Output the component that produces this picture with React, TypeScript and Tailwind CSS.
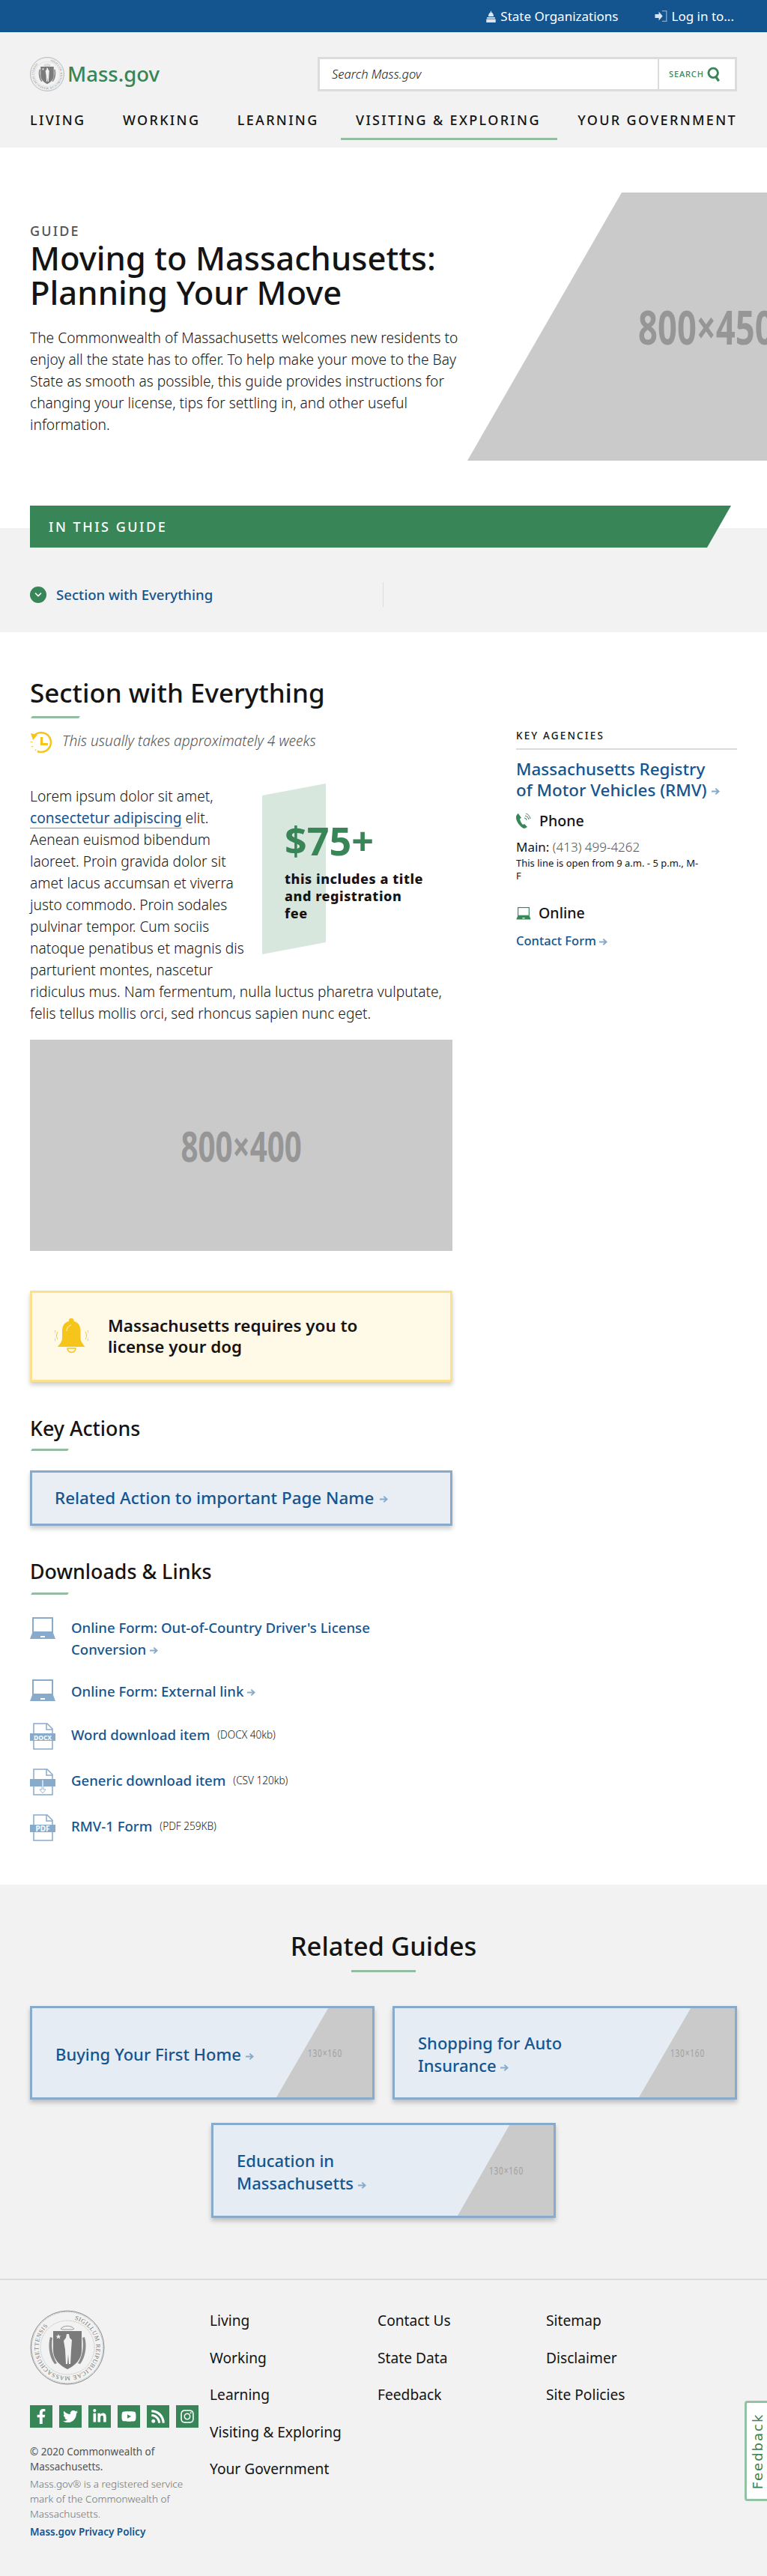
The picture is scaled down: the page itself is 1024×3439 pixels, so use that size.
import { FaFacebookF, FaInstagram, FaLinkedinIn, FaRss, FaTwitter, FaYoutube } from "react-icons/fa";
import { ChevronDown } from "lucide-react";

const navItems = ["Living", "Working", "Learning", "Visiting & Exploring", "Your Government"];
const socials = [FaFacebookF, FaTwitter, FaLinkedinIn, FaYoutube, FaRss, FaInstagram];

const Arrow = ({ className = "" }: { className?: string }) => (
  <svg viewBox="0 0 12 12" className={`inline-block h-[11px] w-[11px] fill-[#88aacb] ${className}`}>
    <path d="M6.5 1 12 6l-5.500 5-1.400-1.500L7.600 7.200H0V4.800h7.600L5.100 2.500z" />
  </svg>
);

const Seal = ({ className = "" }: { className?: string }) => (
  <svg viewBox="0 0 100 100" className={className}>
    <circle cx="50" cy="50" r="49" fill="#f2f2f2" stroke="#8a8a8a" strokeWidth="1" />
    <circle cx="50" cy="50" r="47.500" fill="none" stroke="#9a9a9a" strokeWidth="0.800" strokeDasharray="1 0.800" />
    <circle cx="50" cy="50" r="36" fill="none" stroke="#9a9a9a" strokeWidth="0.600" strokeDasharray="1 0.800" />
    <defs>
      <path id="sealRing" d="M50 11.500a38.500 38.500 0 1 1-.01 0" />
    </defs>
    <text fontSize="8.200" fill="#777" fontFamily="'Liberation Serif', serif" letterSpacing="0.500">
      <textPath href="#sealRing" startOffset="4%">
        SIGILLUM REIPUBLICAE MASSACHUSETTENSIS
      </textPath>
    </text>
    <path d="M31 28h38v26c0 12-9 20-19 25-10-5-19-13-19-25z" fill="#7b7b7b" />
    <path d="M27 36c-3 10-2 26 6 36l3-1c-6-9-8-22-6-34zM73 36c3 10 2 26-6 36l-3-1c6-9 8-22 6-34z" fill="#8a8a8a" />
    <path d="M49 32h3l1 5 3 3-1 13-1 19h-2l-1-13-1 13h-2l-1-19-2-12 3-4z" fill="#f2f2f2" />
    <path d="m38 32 1 2.500h2.500l-2 1.500.8 2.500-2.300-1.500-2.300 1.500.8-2.500-2-1.500H37z" fill="#f2f2f2" />
    <path d="M41 25c4-5 14-5 18 0l-3 1H44z" fill="none" stroke="#9a9a9a" strokeWidth="1" />
  </svg>
);

const Laptop = ({ color = "#88aacb", className = "" }: { color?: string; className?: string }) => (
  <svg viewBox="0 0 34 30" className={className}>
    <rect x="4" y="1" width="26" height="19" fill="none" stroke={color} strokeWidth="2" />
    <path d="M3 21h28l3 8H0z" fill={color} />
    <rect x="14" y="25" width="6" height="2" fill="#fff" />
  </svg>
);

const FileIcon = ({ label }: { label?: string }) => (
  <svg viewBox="0 0 34 36" className="h-[36px] w-[34px] shrink-0">
    <path d="M5 1h18l7 7v27H5z" fill="#fff" stroke="#88aacb" strokeWidth="1.500" />
    <path d="M22 1v8h8" fill="none" stroke="#88aacb" strokeWidth="1.500" />
    <rect x="0" y="14" width="34" height="10" fill="#88aacb" />
    {label ? (
      <text x="17" y="22.500" textAnchor="middle" fontSize={label.length > 3 ? "8.500" : "10"} fontWeight="700" fill="#fff" fontFamily="'Noto Sans', sans-serif">
        {label}
      </text>
    ) : (
      <path d="M16 15h2v13h3l-4 5-4-5h3z" fill="#fff" stroke="#88aacb" strokeWidth="0.800" />
    )}
  </svg>
);

const Placeholder = ({ text, className = "" }: { text: string; className?: string }) => (
  <span className={`inline-block whitespace-nowrap scale-x-[0.72] ${className}`}>{text}</span>
);

const Rule = ({ className = "" }: { className?: string }) => (
  <div className={`h-[3px] -skew-x-[30deg] bg-[#92bda3] ${className}`} />
);

const GuideCard = ({ lines, className = "h-[125px]" }: { lines: string[]; className?: string }) => (
  <a className={`flex w-[460px] border-[3px] border-[#88aacb] bg-[#e6ecf4] shadow-[0_4px_6px_rgba(0,0,0,0.22)] ${className}`}>
    <div className="flex flex-1 items-center pl-[31px] pt-[2px]">
      <p className="text-[22px] font-medium leading-[30px] text-[#14558f]">
        {lines[0]}
        {lines[1] && <br />}
        {lines[1]} <Arrow className="align-[0px]" />
      </p>
    </div>
    <div className="flex w-[128px] items-center justify-center self-stretch bg-[#cacaca] pl-[2px] [clip-path:polygon(54%_0,100%_0,100%_100%,0_100%)]">
      <Placeholder text="130×160" className="text-[14px] font-normal tracking-[0.08em] text-[#a0a0a0]" />
    </div>
  </a>
);

const App = () => {
  return (
    <div className="relative h-[3439px] w-full overflow-hidden bg-white font-['Noto_Sans',sans-serif] text-[#141414]">
      <div className="flex h-[43px] items-center justify-end bg-[#14558f] pr-[44px] text-[17px] text-white">
        <span className="flex items-center gap-[5px]">
          <svg viewBox="0 0 16 18" className="h-[16px] w-[15px] fill-[#dbe4ef]">
            <path d="M8 0l1 3c2 1 3 3 3 6H4c0-3 1-5 3-6zM2 10h12v2H2zM1 13h14v5H1z" />
          </svg>
          State Organizations
        </span>
        <span className="ml-[47px] flex items-center gap-[4px]">
          <svg viewBox="0 0 20 20" className="h-[17px] w-[20px]">
            <path d="M0 7h6V3l6 7-6 7v-4H0z" fill="#dbe4ef" />
            <path d="M11 2h7v16h-7" fill="none" stroke="#88aacb" strokeWidth="1.500" />
          </svg>
          Log in to...
        </span>
      </div>

      <header className="h-[154px] bg-[#f2f2f2] px-10 pt-[33px]">
        <div className="flex h-[46px] items-center justify-between">
          <div className="flex items-center gap-[4px]">
            <Seal className="h-[46px] w-[46px]" />
            <span className="text-[27.500px] font-medium text-[#388557]">Mass.gov</span>
          </div>
          <div className="flex h-[46px] w-[560px] border-[3px] border-[#dcdcdc] bg-white">
            <span className="flex flex-1 items-center pl-[16px] text-[16.500px] font-light italic text-[#141414]">Search Mass.gov</span>
            <span className="flex w-[103px] items-center gap-[3px] border-l-2 border-[#dcdcdc] pl-[13px] text-[11px] font-medium tracking-[0.08em] text-[#388557]">
              SEARCH
              <svg viewBox="0 0 22 24" className="h-[20px] w-[20px]">
                <circle cx="10" cy="10" r="7.500" fill="none" stroke="#388557" strokeWidth="3.500" />
                <path d="M14 16l5 7" stroke="#388557" strokeWidth="4" />
              </svg>
            </span>
          </div>
        </div>
        <nav className="mt-[26px] flex justify-between">
          {navItems.map((item) => (
            <span key={item} className="relative text-[18px] font-medium uppercase leading-[24px] tracking-[0.13em] text-[#141414]">
              {item}
              {item === "Visiting & Exploring" && (
                <span className="absolute -left-[20px] -right-[22px] top-[36px] h-[3px] bg-[#92bda3]" />
              )}
            </span>
          ))}
        </nav>
      </header>

      <section className="flex h-[508px] items-start">
        <div className="w-[624px] pl-10 pt-[99px]">
          <p className="text-[18px] font-medium uppercase leading-[24px] tracking-[0.12em] text-[#535353]">Guide</p>
          <h1 className="mt-px text-[43.600px] font-medium leading-[46px] text-[#141414]">
            Moving to Massachusetts:
            <br />
            Planning Your Move
          </h1>
          <p className="mt-[23px] w-[580px] text-[19.200px] font-light leading-[29px] text-[#141414]">
            The Commonwealth of Massachusetts welcomes new residents to enjoy all the state has to offer. To help make
            your move to the Bay State as smooth as possible, this guide provides instructions for changing your license,
            tips for settling in, and other useful information.
          </p>
        </div>
        <div className="mt-[60px] flex h-[358px] w-[400px] items-center overflow-hidden bg-[#cacaca] pl-[228px] [clip-path:polygon(51.500%_0,100%_0,100%_100%,0_100%)]">
          <Placeholder text="800×450" className="origin-left text-[63px] font-bold text-[#969696]" />
        </div>
      </section>

      <section className="h-[139px] bg-[#f2f2f2]">
        <div className="ml-10 flex h-[56px] w-[936px] -translate-y-[30px] items-center bg-[#388557] pl-[25px] text-[18px] font-medium uppercase tracking-[0.14em] text-white [clip-path:polygon(0_0,100%_0,calc(100%-32px)_100%,0_100%)]">
          In this guide
        </div>
        <div className="mt-[16px] flex h-[33px] w-[472px] translate-x-10 items-center border-r border-[#dcdcdc]">
          <span className="flex h-[22px] w-[22px] items-center justify-center rounded-full bg-[#388557] text-white">
            <ChevronDown size={14} strokeWidth={3} />
          </span>
          <a className="ml-[13px] text-[18.600px] font-medium text-[#14558f]">Section with Everything</a>
        </div>
      </section>

      <main className="flex h-[1672px] px-10 pt-[61px]">
        <div className="w-[564px]">
          <h2 className="text-[35px] font-medium leading-[40px]">Section with Everything</h2>
          <Rule className="ml-[2px] mt-[11px] w-[64px]" />
          <div className="mt-[16px] flex h-[30px] items-center gap-[13px]">
            <svg viewBox="0 0 30 30" className="h-[30px] w-[30px]">
              <path d="M4 9a13 13 0 1 1 6 19" fill="none" stroke="#f6c51b" strokeWidth="2.500" />
              <path d="M1 4l9 2-6 7zM14 9h3v8h7v3H14z" fill="#f6c51b" />
              <path d="M2 15v1M3 21l.500 1M7 26l.800.500" stroke="#f6c51b" strokeWidth="2.500" />
            </svg>
            <p className="-mt-[2px] text-[19.200px] font-light italic text-[#535353]">This usually takes approximately 4 weeks</p>
          </div>
          <div className="mt-[43px] text-[19.200px] font-light leading-[29px]">
            <aside className="relative float-right -mt-[2px] mb-[10px] h-[238px] w-[264px] pl-[40px] pt-[40px]">
              <div className="absolute left-[10px] top-0 h-[228px] w-[85px] bg-[#d8e7de] [clip-path:polygon(0_7%,100%_0,100%_93%,0_100%)]" />
              <p className="relative text-[52px] font-bold leading-[72px] text-[#388557]">$75+</p>
              <p className="relative mt-[4px] w-[190px] text-[18px] font-extrabold leading-[23px] tracking-[0.03em] text-[#141414]">
                this includes a title and registration fee
              </p>
            </aside>
            <p>
              Lorem ipsum dolor sit amet,{" "}
              <a className="border-b border-[#6f95bb] font-normal text-[#14558f]">consectetur adipiscing</a> elit. Aenean
              euismod bibendum laoreet. Proin gravida dolor sit amet lacus accumsan et viverra justo commodo. Proin sodales
              pulvinar tempor. Cum sociis natoque penatibus et magnis dis parturient montes, nascetur ridiculus mus. Nam
              fermentum, nulla luctus pharetra vulputate, felis tellus mollis orci, sed rhoncus sapien nunc eget.
            </p>
          </div>

          <div className="mt-[21px] flex h-[282px] items-center justify-center bg-[#cacaca]">
            <Placeholder text="800×400" className="text-[56px] font-bold text-[#969696]" />
          </div>

          <div className="mt-[53px] flex h-[122px] items-center border-[3px] border-[#fbe08d] bg-[#fff9e8] pl-[30px] shadow-[0_4px_6px_rgba(0,0,0,0.2)]">
            <svg viewBox="0 0 45 48" className="h-[48px] w-[45px]">
              <path d="M22.500 0a3 3 0 0 1 3 4c6 1 9 6 9 13v9c0 5 3 8 6 12H4c3-4 6-7 6-12v-9c0-7 3-12 9-13a3 3 0 0 1 3.500-4z" fill="#f6c51b" />
              <path d="M17 40h11a5.500 5.500 0 0 1-11 0z" fill="none" stroke="#f6c51b" strokeWidth="1.500" />
              <path d="M4 18c-2 3-2 7 0 10M1 16c-2 4-2 10 0 14M41 18c2 3 2 7 0 10M44 16c2 4 2 10 0 14" fill="none" stroke="#f6c51b" strokeWidth="1" />
              <path d="M16 17c0-4 2-7 6-8" fill="none" stroke="#fff9e8" strokeWidth="1" />
            </svg>
            <p className="ml-[26px] w-[370px] text-[22.400px] font-semibold leading-[28px]">
              Massachusetts requires you to license your dog
            </p>
          </div>

          <h3 className="mt-[45px] text-[26.800px] font-medium leading-[34px]">Key Actions</h3>
          <Rule className="ml-[2px] mt-[10px] w-[49px]" />
          <a className="mt-[26px] flex h-[74px] items-center border-[3px] border-[#88aacb] bg-[#e9edf4] pl-[30px] text-[22.400px] font-medium text-[#14558f] shadow-[0_4px_6px_rgba(0,0,0,0.2)]">
            Related Action to important Page Name
            <Arrow className="ml-[8px] mt-[3px]" />
          </a>

          <h3 className="mt-[44px] text-[26.800px] font-medium leading-[34px]">Downloads &amp; Links</h3>
          <Rule className="ml-[2px] mt-[11px] w-[49px]" />
          <div className="mt-[29px] flex items-start">
            <Laptop className="mt-px h-[30px] w-[34px] shrink-0" />
            <a className="ml-[21px] w-[460px] text-[18.600px] font-medium leading-[29px] text-[#14558f]">
              Online Form: Out-of-Country Driver's License Conversion <Arrow />
            </a>
          </div>
          <div className="mt-[26px] flex items-center">
            <Laptop className="h-[30px] w-[34px] shrink-0" />
            <a className="ml-[21px] text-[18.600px] font-medium leading-[29px] text-[#14558f]">
              Online Form: External link <Arrow />
            </a>
          </div>
          {[
            { label: "DOCX", title: "Word download item", size: "(DOCX 40kb)", mt: "mt-[28px]" },
            { title: "Generic download item", size: "(CSV 120kb)", mt: "mt-[25px]" },
            { label: "PDF", title: "RMV-1 Form", size: "(PDF 259KB)", mt: "mt-[25px]" },
          ].map((row) => (
            <div key={row.title} className={`flex h-[36px] items-center ${row.mt}`}>
              <FileIcon label={row.label} />
              <a className="ml-[21px] -mt-[6px] text-[18.600px] font-medium leading-[29px] text-[#14558f]">{row.title}</a>
              <span className="ml-[10px] -mt-[3px] text-[13.600px] font-light">{row.size}</span>
            </div>
          ))}
        </div>

        <aside className="ml-[85px] w-[295px] pt-[67px]">
          <p className="border-b-2 border-[#dcdcdc] pb-[7px] text-[13.500px] font-medium uppercase leading-[20px] tracking-[0.16em]">Key Agencies</p>
          <a className="mt-[12px] block text-[22.400px] font-medium leading-[28px] text-[#14558f]">
            Massachusetts Registry
            <br />
            of Motor Vehicles (RMV) <Arrow className="ml-[1px]" />
          </a>
          <div className="mt-[15px] flex h-[24px] items-center">
            <svg viewBox="0 0 20 20" className="h-[20px] w-[20px]">
              <path d="M3 0c-2 1-3 3-3 5 0 6 5 12 10 15 2 0 3-1 5-2l-4-4-2 1C7 13 5 9 5 7l2-1z" fill="#388557" />
              <path d="M11 6a3 3 0 0 1 3 3M12 3a6 6 0 0 1 5 5M13 0a9 9 0 0 1 6 7" fill="none" stroke="#388557" strokeWidth="1" />
            </svg>
            <span className="ml-[11px] text-[19.600px] font-medium">Phone</span>
          </div>
          <p className="mt-[11px] text-[17px] leading-[24px]">
            Main: <span className="font-light text-[#535353]">(413) 499-4262</span>
          </p>
          <p className="mt-px text-[13px] leading-[17px]">
            This line is open from 9 a.m. - 5 p.m., M-
            <br />F
          </p>
          <div className="mt-[29px] flex h-[24px] items-center">
            <Laptop color="#388557" className="h-[17px] w-[20px]" />
            <span className="ml-[10px] text-[19.600px] font-medium">Online</span>
          </div>
          <a className="mt-[13px] block text-[16.500px] font-medium leading-[24px] text-[#14558f]">
            Contact Form <Arrow className="h-[9px] w-[9px]" />
          </a>
        </aside>
      </main>

      <section className="h-[526px] bg-[#f2f2f2] pt-[60px]">
        <h2 className="text-center text-[34.600px] font-medium leading-[44px]">Related Guides</h2>
        <div className="mx-auto mt-[10px] h-[3px] w-[86px] bg-[#92bda3]" />
        <div className="mt-[45px] flex flex-wrap justify-center gap-x-6 gap-y-[31px] px-10">
          <GuideCard lines={["Buying Your First Home"]} />
          <GuideCard lines={["Shopping for Auto", "Insurance"]} />
          <GuideCard lines={["Education in", "Massachusetts"]} className="h-[127px]" />
        </div>
      </section>

      <footer className="flex h-[397px] border-t-2 border-[#dcdcdc] bg-[#f2f2f2] pl-10 pt-[40px]">
        <div className="w-[240px]">
          <Seal className="h-[100px] w-[100px]" />
          <div className="mt-[27px] flex gap-[9px]">
            {socials.map((Icon, i) => (
              <span key={i} className="flex h-[30px] w-[30px] items-center justify-center bg-[#388557] text-[20px] text-white">
                <Icon />
              </span>
            ))}
          </div>
          <p className="mt-[22px] w-[225px] text-[13.500px] leading-[20px] text-[#535353]">© 2020 Commonwealth of Massachusetts.</p>
          <p className="mt-[3px] w-[225px] text-[13.500px] font-light leading-[20px] text-[#707070]">
            Mass.gov® is a registered service mark of the Commonwealth of Massachusetts.
          </p>
          <a className="mt-[4px] block text-[13.500px] font-semibold leading-[20px] text-[#14558f]">Mass.gov Privacy Policy</a>
        </div>
        {[
          { w: "w-[224px]", items: navItems.map((n) => n) },
          { w: "w-[225px]", items: ["Contact Us", "State Data", "Feedback"] },
          { w: "w-[200px]", items: ["Sitemap", "Disclaimer", "Site Policies"] },
        ].map((col) => (
          <ul key={col.items[0]} className={`flex flex-col gap-[22.500px] text-[19.200px] leading-[27px] ${col.w}`}>
            {col.items.map((item) => (
              <li key={item}>{item}</li>
            ))}
          </ul>
        ))}
      </footer>

      <div className="absolute left-[994px] top-[3205px] flex h-[134px] w-[30px] items-center justify-center rounded-l-[4px] border-[3px] border-r-0 border-[#93c1a5] bg-white pl-[2px]">
        <span className="-rotate-90 whitespace-nowrap font-['DejaVu_Sans',sans-serif] text-[18px] tracking-[2px] text-[#388557]">Feedback</span>
      </div>
    </div>
  );
};

export default App;
